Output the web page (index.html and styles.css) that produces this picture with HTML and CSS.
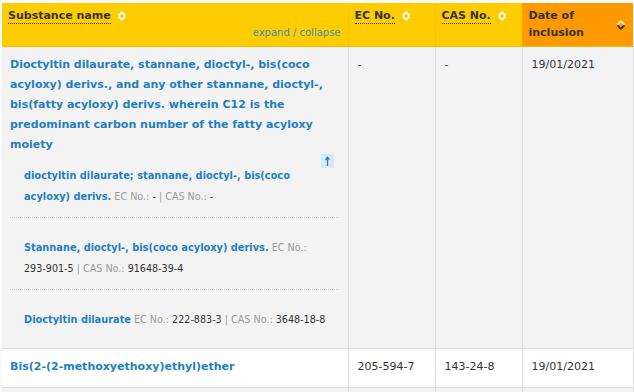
FILE: index.html
```html
<!DOCTYPE html>
<html>
<head>
<meta charset="utf-8">
<link rel="stylesheet" href="styles.css">
</head>
<body>
<div class="page">
<table class="list">
  <colgroup>
    <col class="c-name"><col class="c-ec"><col class="c-cas"><col class="c-date">
  </colgroup>
  <thead>
    <tr>
      <th>
        <div class="th-line"><span class="th-title">Substance name</span><svg class="sort" viewBox="0 0 8 12" width="8" height="12"><path d="M1.2 5 L4 2.2 L6.8 5" /><path d="M1.2 7 L4 9.8 L6.8 7" /></svg></div>
        <div class="toggle">expand / collapse</div>
      </th>
      <th><div class="th-line"><span class="th-title">EC No.</span><svg class="sort" viewBox="0 0 8 12" width="8" height="12"><path d="M1.2 5 L4 2.2 L6.8 5" /><path d="M1.2 7 L4 9.8 L6.8 7" /></svg></div></th>
      <th><div class="th-line"><span class="th-title">CAS No.</span><svg class="sort" viewBox="0 0 8 12" width="8" height="12"><path d="M1.2 5 L4 2.2 L6.8 5" /><path d="M1.2 7 L4 9.8 L6.8 7" /></svg></div></th>
      <th class="sorted">
        <div class="th-sorted"><span class="th-plain">Date of inclusion</span><svg class="sort sort-desc" viewBox="0 0 8 12" width="8" height="12"><path class="up" d="M1.2 5 L4 2.2 L6.8 5" /><path class="down" d="M1.2 7 L4 9.8 L6.8 7" /></svg></div>
      </th>
    </tr>
  </thead>
  <tbody>
    <tr class="odd">
      <td>
        <a class="name">Dioctyltin dilaurate, stannane, dioctyl-, bis(coco acyloxy) derivs., and any other stannane, dioctyl-, bis(fatty acyloxy) derivs. wherein C12 is the predominant carbon number of the fatty acyloxy moiety</a>
        <div class="subs">
          <span class="up-btn"><svg viewBox="0 0 13 14" width="13" height="14"><path d="M6.5 12 V3" /><path d="M4.3 5.6 L6.5 2.6 L8.7 5.6 Z" class="head" /></svg></span>
          <div class="sub first"><a class="sub-name">dioctyltin dilaurate; stannane, dioctyl-, bis(coco acyloxy) derivs.</a> <span class="lbl">EC No.:</span> <span class="val">-</span> <span class="lbl">| CAS No.:</span> <span class="val">-</span></div>
          <div class="sub"><a class="sub-name">Stannane, dioctyl-, bis(coco acyloxy) derivs.</a> <span class="lbl">EC No.:</span> <span class="val">293-901-5</span> <span class="lbl">| CAS No.:</span> <span class="val">91648-39-4</span></div>
          <div class="sub last"><a class="sub-name">Dioctyltin dilaurate</a> <span class="lbl">EC No.:</span> <span class="val">222-883-3</span> <span class="lbl">| CAS No.:</span> <span class="val">3648-18-8</span></div>
        </div>
      </td>
      <td class="data">-</td>
      <td class="data">-</td>
      <td class="data">19/01/2021</td>
    </tr>
    <tr class="even">
      <td><a class="name">Bis(2-(2-methoxyethoxy)ethyl)ether</a></td>
      <td class="data">205-594-7</td>
      <td class="data">143-24-8</td>
      <td class="data">19/01/2021</td>
    </tr>
    <tr class="odd">
      <td><a class="name">&nbsp;</a></td>
      <td class="data"></td>
      <td class="data"></td>
      <td class="data"></td>
    </tr>
  </tbody>
</table>
</div>
</body>
</html>
```

FILE: styles.css
```css
html, body {
  margin: 0;
  padding: 0;
  background: #ffffff;
}
body {
  font-family: "DejaVu Sans", Verdana, sans-serif;
  color: #333333;
}
.page {
  padding: 3px 0 0 2px;
  height: 389px;
  overflow: hidden;
  background: #fafafa;
}
.list {
  border-collapse: collapse;
  table-layout: fixed;
  width: 631px;
  background: #ffffff;
}
.c-name { width: 346px; }
.c-ec { width: 87px; }
.c-cas { width: 87px; }
.c-date { width: 111px; }

th {
  background: #ffcc00;
  text-align: left;
  vertical-align: top;
  padding: 5px 7px 4px 6px;
  font-size: 11px;
  font-weight: bold;
  line-height: 17px;
  color: #333333;
  border-left: 1px solid #f7c600;
  border-bottom: 1px solid #f0be00;
  height: 34px;
}
th:first-child { border-left: none; }
th.sorted {
  background: #ff9900;
  border-left: 1px solid #f5a000;
}
.th-line {
  display: flex;
  align-items: center;
  gap: 7px;
}
.th-title {
  border-bottom: 1px dotted #333333;
  line-height: 15px;
}
.sort path {
  fill: none;
  stroke: #ffffff;
  stroke-width: 1.8;
  stroke-linecap: round;
  stroke-linejoin: round;
}
.sort-desc .up { stroke: #ffe9b8; }
.sort-desc .down { stroke: #333333; }
.th-sorted {
  display: flex;
  align-items: center;
  justify-content: space-between;
  height: 34px;
  padding-right: 1px;
}
.th-plain {
  width: 80px;
  line-height: 16.5px;
  align-self: flex-start;
}
.toggle {
  text-align: right;
  font-size: 10px;
  font-weight: normal;
  color: #3f8fb5;
  line-height: 17px;
}

td {
  vertical-align: top;
  padding: 8px 9px 10px 9px;
  border-left: 1px solid #dddddd;
  border-right: 1px solid #dddddd;
  border-bottom: 1px solid #dddddd;
  line-height: 20px;
}
tr.odd td { background: #f3f3f3; }
tr.even td { background: #ffffff; }
td:first-child { padding-left: 8px; border-left: none; }
td.data {
  font-size: 11px;
  color: #333333;
}
.name {
  display: block;
  font-size: 11px;
  font-weight: bold;
  color: #1f7fbf;
  line-height: 20px;
  padding-right: 6px;
}
.subs {
  position: relative;
}
.up-btn {
  position: absolute;
  right: 5px;
  top: -1px;
  width: 13px;
  height: 14px;
  background: #d3ebfa;
  display: flex;
}
.up-btn path {
  stroke: #2a7fc0;
  stroke-width: 1.3;
  fill: none;
}
.up-btn path.head {
  fill: #2a7fc0;
  stroke-width: 0.6;
}
.sub {
  padding: 19px 6px 10px 14px;
  border-bottom: 1px dotted #c8c8c8;
  line-height: 21px;
  font-size: 9.6px;
}
.sub.first { padding-top: 10px; }
.sub.last { border-bottom: none; padding-bottom: 8px; }
.sub-name {
  font-size: 9.8px;
  font-weight: bold;
  color: #1f7fbf;
}
.lbl { color: #9a9a9a; }
.val {
  color: #333333;
  white-space: nowrap;
}
```
